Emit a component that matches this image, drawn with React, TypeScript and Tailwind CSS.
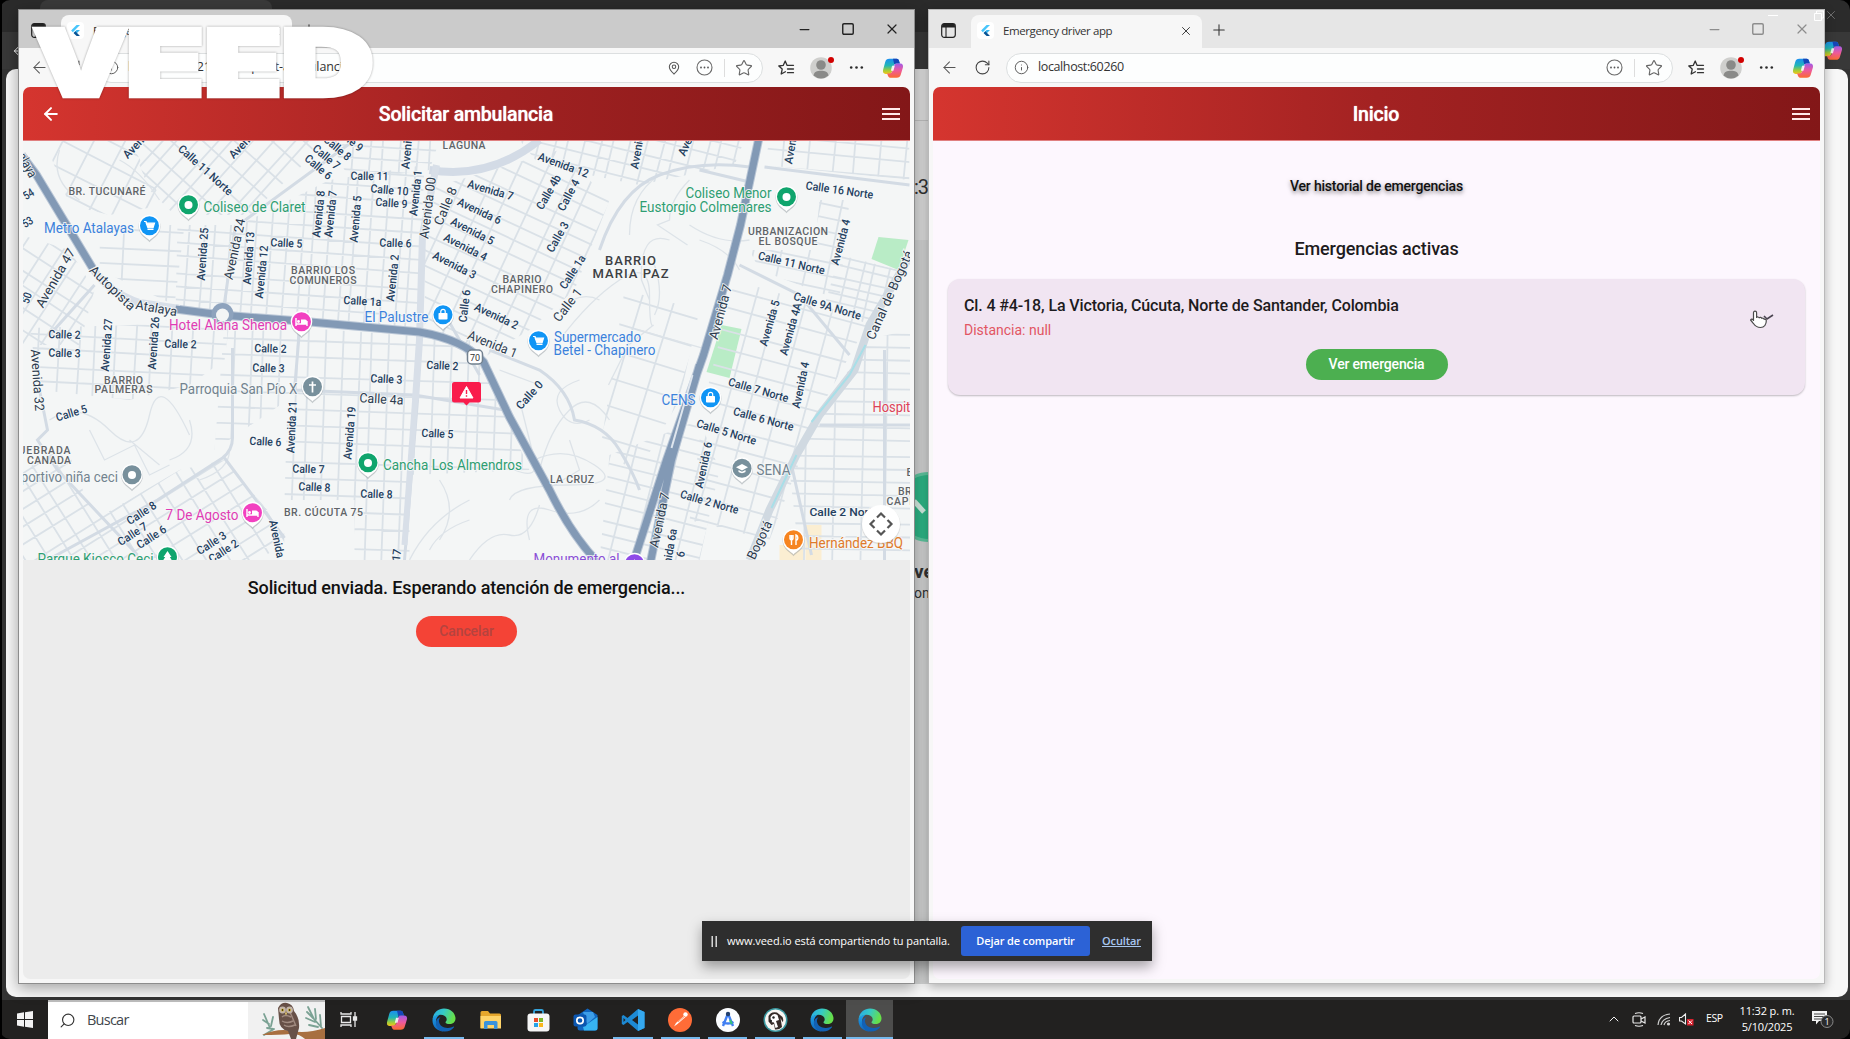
import React from "react";
import {
  ArrowLeft, RotateCw, Info, MapPin, Star, X, Plus, Minus, Square, Search, ChevronUp,
} from "lucide-react";

/* ---------- shared icons ---------- */

function Flutter({ size = 14 }: { size?: number }) {
  return (
    <svg width={size} height={size} viewBox="0 0 16 16" className="shrink-0">
      <path d="M9.3 1.2 2.6 7.9l2.1 2.1L13.5 1.2z" fill="#47c5fb" />
      <path d="M9.3 7.4 5.7 11l2.1 2.1 5.7-5.7z" fill="#35b3ee" />
      <path d="m5.7 11 2.1-2.1 5.7 5.9H9.3z" fill="#0b5394" />
    </svg>
  );
}

function Copilot({ size = 22 }: { size?: number }) {
  return (
    <svg width={size} height={size} viewBox="0 0 24 24" className="shrink-0">
      <defs>
        <linearGradient id="cpA" x1="0" y1="0" x2="0" y2="1">
          <stop offset="0" stopColor="#1b8ff0" />
          <stop offset=".45" stopColor="#22b7b5" />
          <stop offset=".75" stopColor="#9ccc3c" />
          <stop offset="1" stopColor="#f5c518" />
        </linearGradient>
        <linearGradient id="cpB" x1="0" y1="0" x2="0" y2="1">
          <stop offset="0" stopColor="#a05be8" />
          <stop offset=".5" stopColor="#ee5a9b" />
          <stop offset="1" stopColor="#fb6a32" />
        </linearGradient>
      </defs>
      <path d="M8 2h8c1.800 0 2.300 1.200 2.800 2.800L19.500 7H16c-2 0-2.800 1-3.400 3l-1.800 6c-.5 1.600-1.300 2.500-3 2.500H4C1.500 18.500.6 16.500 1.200 14l2.300-8.500C4.200 3 5.500 2 8 2z" fill="url(#cpA)" />
      <path d="M12 2h4c1.800 0 2.300 1.200 2.800 2.800L19.500 7H16c-1.300 0-2 .4-2.600 1.200z" fill="#1546b8" />
      <path d="M16 22.500H9c-1.800 0-2.300-1.200-2.800-2.800L5.500 18H8c2 0 2.800-1 3.400-3l1.800-5.500C13.700 8 14.500 7 16.200 7H20c2.500 0 3.400 2 2.800 4.500l-2.300 7.500c-.7 2.500-2 3.500-4.500 3.500z" fill="url(#cpB)" />
      <path d="M11 9.500h3L12.500 15H9.600z" fill="#fff" opacity=".85" />
    </svg>
  );
}

function Edge() {
  return (
    <svg width="24" height="24" viewBox="0 0 24 24">
      <defs>
        <linearGradient id="eg1" x1="0" y1="0" x2="1" y2=".3">
          <stop offset="0" stopColor="#27a7e8" />
          <stop offset=".5" stopColor="#35c9c6" />
          <stop offset="1" stopColor="#66df4a" />
        </linearGradient>
        <linearGradient id="eg2" x1="0" y1="0" x2="0" y2="1">
          <stop offset="0" stopColor="#1fa3ec" />
          <stop offset="1" stopColor="#0f62b8" />
        </linearGradient>
      </defs>
      <path d="M.6 11.500C1 5 6 .5 12 .5c7 0 11.500 5 11.500 10 0 3.600-2.800 5.600-6 5.600-2.600 0-4-.8-4-1.800 0-.6 1.200-1 1.200-3 0-2.400-2.500-4.600-6-4.600-4 0-7 2.200-8.100 4.800z" fill="url(#eg1)" />
      <path d="M.5 12C.9 8.700 4 6.500 8 6.700c-2.600 1.200-4.300 4-4 7.600.4 4.200 3.400 7.700 7.600 9.200C5 23.500.2 18.500.5 12z" fill="url(#eg2)" />
      <path d="M8.700 9.200c-1.400 1-2 2.600-1.700 4.600.6 4 4.600 6.400 9 6.200 2.400-.1 4.200-.8 5.600-1.400.5-.2.700.3.400.7-2 2.800-5.600 4.500-9.600 4.300C7 23.200 3.400 18.500 3.900 14c.3-2.700 2.400-4.500 4.800-4.800z" fill="#1261b4" />
    </svg>
  );
}

function Avatar() {
  return (
    <div className="relative h-[22px] w-[22px]">
      <svg width="22" height="22" viewBox="0 0 22 22">
        <circle cx="11" cy="11" r="10.800" fill="#cfcfcd" />
        <circle cx="11" cy="8" r="4.800" fill="#8a8a88" />
        <path d="M3.500 18.500C4 14.800 7 13.800 11 13.800s7 1 7.500 4.700A11 11 0 0 1 3.500 18.500z" fill="#8a8a88" />
      </svg>
      <span className="absolute -right-[2px] top-0 h-[6px] w-[6px] rounded-full bg-[#d10000]" />
    </div>
  );
}

function Dots({ circled = false }: { circled?: boolean }) {
  return (
    <svg width="17" height="17" viewBox="0 0 17 17">
      {circled && <circle cx="8.500" cy="8.500" r="7.500" fill="none" stroke="#6a6a6a" strokeWidth="1.100" />}
      {[circled ? 5 : 3.2, 8.5, circled ? 12 : 13.8].map((x) => (
        <circle key={x} cx={x} cy="8.500" r={circled ? 0.9 : 1.3} fill={circled ? "#555" : "#2b2b2b"} />
      ))}
    </svg>
  );
}

function Favorites() {
  return (
    <svg width="17" height="16" viewBox="0 0 17 16" fill="none" stroke="#333" strokeWidth="1.300" strokeLinejoin="round" strokeLinecap="round">
      <path d="M9 5.300 7.200 1 5.200 5.400.8 6l3.400 3.100-1 4.900L7.400 11.700M9 5.300h6.500M9.500 9h6M9.500 12.700h6" />
    </svg>
  );
}

/* ---------- browser frame ---------- */

type FrameProps = {
  active?: boolean;
  title: string;
  url: string;
  showPin?: boolean;
  tabIndent: string;
  tabWidth: string;
  heading: string;
  back?: boolean;
  children: React.ReactNode;
};

function BrowserWindow({ active, title, url, showPin, tabIndent, tabWidth, heading, back, children }: FrameProps) {
  const strip = active ? "bg-[#cbcbcb]" : "bg-[#e6e6e6]";
  const ctl = active ? "text-[#222]" : "text-[#8d8d8d]";
  const urlTracking = active ? "tracking-[-0.1px]" : "tracking-[-0.38px]";
  return (
    <div className="flex h-full flex-col bg-[#f7f7f7]">
      <div className={`flex h-[38px] shrink-0 items-end ${strip}`}>
        <div className={`${tabIndent} flex h-[34px] shrink-0 items-center pb-[2px] pl-[12px]`}>
          <svg width="15" height="15" viewBox="0 0 15 15">
            <rect x=".7" y=".7" width="13.600" height="13.600" rx="2.500" fill="none" stroke="#222" strokeWidth="1.200" />
            <path d="M1 3.500C1 1.500 1.800 1 3.200 1h8.600C13.200 1 14 1.500 14 3.500V4.500H1z" fill="#222" />
            <path d="M5 4v10" stroke="#222" strokeWidth="1.100" />
          </svg>
        </div>
        <div className={`${tabWidth} flex h-[33px] shrink-0 items-center rounded-t-lg bg-[#f7f7f7] pl-[6px] pr-[9px] pb-[2px]`}>
          <span className="flex h-[17px] w-[17px] items-center justify-center rounded-sm bg-white"><Flutter size={13} /></span>
          <span className="ml-[9px] flex-1 whitespace-nowrap font-['Open_Sans',sans-serif] text-[11.5px] tracking-[-0.4px] text-[#333]">{title}</span>
          <X size={14} strokeWidth={1.6} className="text-[#333]" />
        </div>
        <Plus size={18} strokeWidth={1.4} className="mb-[9px] ml-[8px] text-[#333]" />
        <div className={`mb-[11px] ml-auto flex items-center gap-[29px] pr-[14px] ${ctl}`}>
          <Minus size={15} strokeWidth={2} />
          <Square size={14} strokeWidth={2.4} />
          <X size={16} strokeWidth={1.8} />
        </div>
      </div>
      <div className="flex h-[39px] shrink-0 items-center pl-[11px] pr-[10px]">
        <ArrowLeft size={19} strokeWidth={1.3} className="text-[#555]" />
        <RotateCw size={17} strokeWidth={1.5} className="ml-[15px] text-[#444]" />
        <div className="ml-[15px] flex h-[30px] flex-1 items-center rounded-full border border-[#dcdfe0] bg-[#fdfefe] pl-[7px] pr-[9px]">
          <Info size={15} strokeWidth={1.5} className="text-[#555]" />
          <span className={`ml-[9px] flex-1 whitespace-nowrap font-['Open_Sans',sans-serif] text-[12.5px] text-[#333] ${urlTracking}`}>{url}</span>
          {showPin && <MapPin size={14} strokeWidth={1.8} className="mr-[15px] text-[#555]" />}
          <Dots circled />
          <span className="ml-[11px] h-[18px] w-px bg-[#ddd]" />
          <Star size={18} strokeWidth={1.5} className="ml-[10px] text-[#666]" />
        </div>
        <div className="ml-[15px]"><Favorites /></div>
        <div className="ml-[15px]"><Avatar /></div>
        <div className="ml-[16px]"><Dots /></div>
        <div className="ml-[17px]"><Copilot /></div>
      </div>
      <div className="mx-[4px] mb-[4px] flex flex-1 flex-col overflow-hidden rounded-[7px]">
        <header className="flex h-[54px] shrink-0 items-center border-b border-[#e08080] bg-gradient-to-r from-[#d5352f] via-[#a32222] to-[#831718] pl-[18px] pr-[10px] text-white">
          <div className="w-[20px]">{back && <ArrowLeft size={20} strokeWidth={2.4} />}</div>
          <h1 className="flex-1 pr-[11px] pt-[3px] text-center font-['Roboto',sans-serif] text-[19.5px] font-medium tracking-[-0.18px] [text-shadow:0_0_1px_#fff]">{heading}</h1>
          <div className="flex w-[18px] flex-col gap-[3px]">
            <span className="h-[2px] bg-[#ffeaea]" />
            <span className="h-[2px] bg-[#ffeaea]" />
            <span className="h-[2px] bg-[#ffeaea]" />
          </div>
        </header>
        {children}
      </div>
    </div>
  );
}

/* ---------- map ---------- */

type District = { pts: string; cx: number; cy: number; w: number; h: number; a: number; dx: number; dy: number };

const districts: District[] = [
  { pts: "22,235 70,250 95,290 80,345 22,345", cx: 60, cy: 290, w: 140, h: 140, a: -57, dx: 17, dy: 17 },
  { pts: "45,140 130,140 165,205 110,215 70,205", cx: 105, cy: 180, w: 160, h: 160, a: 27, dx: 26, dy: 22 },
  { pts: "130,140 330,140 250,215 175,215 150,190", cx: 230, cy: 180, w: 240, h: 200, a: 42, dx: 14, dy: 22 },
  { pts: "100,225 185,225 175,305 100,270", cx: 140, cy: 260, w: 120, h: 120, a: 3, dx: 44, dy: 16 },
  { pts: "178,225 240,225 330,180 425,165 418,330 176,308", cx: 300, cy: 250, w: 280, h: 220, a: 4, dx: 14, dy: 14 },
  { pts: "330,140 440,140 430,170 350,180", cx: 385, cy: 160, w: 130, h: 80, a: 4, dx: 16, dy: 13 },
  { pts: "425,190 560,150 610,200 575,290 530,330 480,360 425,330", cx: 510, cy: 250, w: 240, h: 260, a: 25, dx: 24, dy: 15 },
  { pts: "520,140 745,140 735,165 640,185 540,165", cx: 640, cy: 150, w: 260, h: 80, a: 14, dx: 15, dy: 14 },
  { pts: "770,140 910,140 910,180 765,165", cx: 840, cy: 160, w: 160, h: 90, a: 5, dx: 24, dy: 14 },
  { pts: "820,200 850,200 840,300 760,270 750,250 815,250", cx: 800, cy: 250, w: 140, h: 130, a: 12, dx: 26, dy: 14 },
  { pts: "840,255 900,270 870,325 825,305", cx: 860, cy: 290, w: 90, h: 90, a: 13, dx: 14, dy: 9 },
  { pts: "735,280 870,320 820,410 770,540 690,520 705,400", cx: 780, cy: 400, w: 260, h: 300, a: 15, dx: 26, dy: 19 },
  { pts: "865,340 911,330 911,560 800,560 790,470 830,405", cx: 860, cy: 450, w: 160, h: 260, a: 1, dx: 27, dy: 13.5 },
  { pts: "30,328 230,322 225,360 190,385 130,400 40,390", cx: 130, cy: 360, w: 220, h: 100, a: 3, dx: 19, dy: 15 },
  { pts: "225,322 470,340 500,400 530,470 410,475 410,560 355,560 355,500 285,500 288,400 215,450", cx: 370, cy: 440, w: 340, h: 260, a: 2, dx: 15.500, dy: 17 },
  { pts: "22,450 70,455 95,520 180,470 225,460 285,530 285,560 22,560", cx: 150, cy: 510, w: 300, h: 200, a: -32, dx: 19, dy: 16 },
  { pts: "610,455 700,420 720,470 700,560 600,560", cx: 660, cy: 500, w: 160, h: 160, a: 14, dx: 22, dy: 14 },
  { pts: "625,290 700,310 680,400 640,470 600,455", cx: 655, cy: 380, w: 130, h: 200, a: 17, dx: 30, dy: 28 },
];

function gridPath(d: District) {
  let s = "";
  let i = 0;
  for (let x = -d.w / 2; x <= d.w / 2; x += d.dx) {
    const j = ((i++ * 37) % 7) - 3;
    s += `M${x + j} ${-d.h / 2}L${x + j * 0.6} ${d.h / 2}`;
  }
  for (let y = -d.h / 2; y <= d.h / 2; y += d.dy) {
    const j = ((i++ * 29) % 5) - 2;
    s += `M${-d.w / 2} ${y + j}L${d.w / 2} ${y + j * 0.5}`;
  }
  return s;
}

type Kind = "st" | "av" | "area" | "big" | "green" | "blue" | "pink" | "gray" | "orange" | "red" | "purple";
const kinds: Record<Kind, { fill: string; size: number; weight: number }> = {
  st: { fill: "#24405f", size: 11.5, weight: 500 },
  av: { fill: "#2c3b4e", size: 13, weight: 400 },
  area: { fill: "#606468", size: 10.5, weight: 500 },
  big: { fill: "#3c4043", size: 13, weight: 500 },
  green: { fill: "#2e9e72", size: 14, weight: 400 },
  blue: { fill: "#3b82dc", size: 14, weight: 400 },
  pink: { fill: "#e03cb4", size: 14, weight: 400 },
  gray: { fill: "#72838f", size: 14, weight: 400 },
  orange: { fill: "#e07a2a", size: 14, weight: 400 },
  red: { fill: "#dd4258", size: 14, weight: 400 },
  purple: { fill: "#8a4fd6", size: 14, weight: 400 },
};

/* text, centre x, centre y, rotation, length, kind */
const labels: [string, number, number, number, number, Kind][] = [
  ["Avenida", 139, 142, -47, 40, "st"],
  ["Avenida", 245, 142, -47, 40, "st"],
  ["Calle 11 Norte", 206, 170, 42, 69, "st"],
  ["alaya", 28, 165, 62, 26, "av"],
  ["54", 29, 194, -32, 11, "st"],
  ["53", 28, 222, -32, 11, "st"],
  ["50", 27, 298, -70, 11, "st"],
  ["BR. TUCUNARÉ", 107.5, 191, 0, 77, "area"],
  ["Coliseo de Claret", 255, 207, 0, 102, "green"],
  ["Metro Atalayas", 89.5, 228, 0, 90, "blue"],
  ["Avenida 47", 56, 278, -60, 66, "av"],
  ["Avenida 25", 203, 254, -86, 53, "st"],
  ["Avenida 24", 235, 249, -78, 62, "av"],
  ["Avenida 13", 249, 258, -86, 53, "st"],
  ["Avenida 12", 262, 272, -84, 53, "st"],
  ["Calle 5", 287, 243, 3, 32, "st"],
  ["Avenida 8", 319, 214, -84, 47, "st"],
  ["Avenida 7", 331, 214, -84, 47, "st"],
  ["Avenida 5", 356, 219, -85, 47, "st"],
  ["Calle 8", 338, 148, 40, 32, "st"],
  ["Calle 9", 350, 139, 40, 32, "st"],
  ["Calle 7", 327, 157, 40, 32, "st"],
  ["Calle 6", 319, 167, 40, 32, "st"],
  ["Calle 11", 370, 176, 1, 38, "st"],
  ["Calle 10", 390, 190, 5, 38, "st"],
  ["Calle 9", 392, 203, 4, 32, "st"],
  ["Calle 6", 396, 243, 2, 32, "st"],
  ["Avenida 3", 408, 144, -85, 50, "st"],
  ["Avenida 1", 416, 193, -84, 46, "st"],
  ["Avenida 00", 428, 208, -83, 62, "av"],
  ["Calle 8", 446, 206, -67, 40, "av"],
  ["Avenida 2", 393, 278, -84, 47, "st"],
  ["Calle 1a", 363, 301, 3, 38, "st"],
  ["Calle 6", 465, 306, -83, 33, "st"],
  ["BARRIO LOS", 323.5, 270, 0, 64, "area"],
  ["COMUNEROS", 323.5, 280, 0, 67, "area"],
  ["LAGUNA", 464.5, 145.500, 0, 43, "area"],
  ["Avenida 12", 564, 165, 20, 53, "st"],
  ["Avenida 7", 491, 190, 16, 47, "st"],
  ["Avenida 6", 480, 211, 25, 47, "st"],
  ["Avenida 5", 473, 231, 27, 47, "st"],
  ["Avenida 4", 466, 247, 27, 47, "st"],
  ["Avenida 3", 455, 265, 27, 47, "st"],
  ["Calle 4b", 549, 192, -60, 38, "st"],
  ["Calle 4", 569, 195, -62, 34, "st"],
  ["Calle 3", 558, 237, -60, 33, "st"],
  ["Calle 1a", 573, 272, -57, 38, "st"],
  ["Calle 1", 568, 305, -52, 38, "av"],
  ["Avenida", 638, 149, -80, 40, "st"],
  ["Avenida", 690, 137, -65, 40, "st"],
  ["Avenida", 792, 144, -80, 40, "st"],
  ["Calle 16 Norte", 840, 190, 8, 68, "st"],
  ["Coliseo Menor", 729, 192.500, 0, 86, "green"],
  ["Eustorgio Colmenares", 706, 206.500, 0, 132, "green"],
  ["URBANIZACION", 788.5, 231, 0, 80, "area"],
  ["EL BOSQUE", 788.5, 241, 0, 59, "area"],
  ["BARRIO", 631, 260, 0, 51, "big"],
  ["MARIA PAZ", 631, 273, 0, 76, "big"],
  ["BARRIO", 522.5, 279, 0, 39, "area"],
  ["CHAPINERO", 522.5, 289, 0, 62, "area"],
  ["Calle 11 Norte", 792, 263, 13, 68, "st"],
  ["Avenida 4", 841, 242, -75, 47, "st"],
  ["Calle 9A Norte", 828, 306, 17, 70, "st"],
  ["Avenida 5", 770, 323, -74, 47, "st"],
  ["Avenida 4A", 791, 329, -74, 54, "st"],
  ["Avenida 7", 721, 312, -75, 56, "av"],
  ["Canal de Bogotá", 890, 295, -66, 96, "av"],
  ["Avenida 2", 497, 316, 25, 47, "st"],
  ["Avenida 1", 493, 344, 22, 52, "av"],
  ["Supermercado", 598, 336.500, 0, 87, "blue"],
  ["Betel - Chapinero", 605, 350, 0, 102, "blue"],
  ["El Palustre", 397, 317, 0, 64, "blue"],
  ["Autopista", 113, 288, 44, 58, "av"],
  ["Atalaya", 157, 308, 10, 42, "av"],
  ["Hotel Alana Shenoa", 228.5, 325, 0, 118, "pink"],
  ["Calle 2", 65, 334.500, 2, 32, "st"],
  ["Calle 3", 65, 353, 2, 32, "st"],
  ["Avenida 27", 107, 345, -86, 53, "st"],
  ["Avenida 26", 154, 343, -86, 53, "st"],
  ["Avenida 32", 38, 380, 86, 62, "av"],
  ["Calle 2", 181, 344, 2, 32, "st"],
  ["Calle 2", 271, 348.500, 2, 32, "st"],
  ["Calle 3", 269, 368, 2, 32, "st"],
  ["Calle 2", 443, 365.500, 3, 32, "st"],
  ["Calle 3", 387, 379, 3, 32, "st"],
  ["Calle 4a", 382, 399, 3, 44, "av"],
  ["Calle 5", 72, 413, -17, 32, "st"],
  ["BARRIO", 124, 380, 0, 39, "area"],
  ["PALMERAS", 124, 389.500, 0, 58, "area"],
  ["Parroquia San Pío X", 239, 389, 0, 118, "gray"],
  ["Calle 6", 266, 441.500, 3, 32, "st"],
  ["Avenida 21", 292, 427, -87, 52, "st"],
  ["Avenida 19", 350, 433, -85, 53, "st"],
  ["Calle 5", 438, 433.500, 3, 32, "st"],
  ["Calle 7", 309, 469, 2, 32, "st"],
  ["Calle 8", 315, 487, 3, 32, "st"],
  ["Calle 8", 377, 494, 2, 32, "st"],
  ["Cancha Los Almendros", 453, 465, 0, 139, "green"],
  ["QUEBRADA", 41, 450.500, 0, 60, "area"],
  ["CANADA", 49.5, 460, 0, 44, "area"],
  ["Deportivo niña ceci", 62, 477, 0, 113, "gray"],
  ["Calle 8", 142, 513, -33, 33, "st"],
  ["Calle 7", 133, 534, -33, 33, "st"],
  ["Calle 6", 152, 537, -33, 33, "st"],
  ["Calle 3", 212, 543, -33, 33, "st"],
  ["Calle 2", 224, 551, -33, 33, "st"],
  ["7 De Agosto", 202.5, 515, 0, 73, "pink"],
  ["Avenida 21", 279, 546, 78, 53, "st"],
  ["BR. CÚCUTA 75", 324, 512.500, 0, 79, "area"],
  ["Parque Kiosco Ceci", 96, 558.500, 0, 116, "green"],
  ["17", 397, 555, -83, 12, "st"],
  ["LA CRUZ", 572.5, 479, 0, 44, "area"],
  ["Calle 0", 530, 395, -48, 34, "st"],
  ["CENS", 679, 400, 0, 34, "blue"],
  ["Calle 7 Norte", 759, 390, 16, 62, "st"],
  ["Calle 6 Norte", 764, 419, 15, 62, "st"],
  ["Calle 5 Norte", 727, 432, 17, 62, "st"],
  ["Avenida 4", 801, 385, -78, 47, "st"],
  ["Avenida 6", 704, 465, -78, 47, "st"],
  ["Calle 2 Norte", 710, 502, 16, 60, "st"],
  ["SENA", 774, 469.500, 0, 34, "gray"],
  ["Avenida 7", 660, 520, -78, 56, "av"],
  ["Avenida 6a", 669, 555, -80, 53, "st"],
  ["6", 681, 554, -80, 6, "st"],
  ["Bogotá", 760, 540, -64, 41, "av"],
  ["Calle 2 Norte", 845, 512, 0, 70, "st"],
  ["Hospital", 897, 406.500, 0, 48, "red"],
  ["BR.", 907, 491.500, 0, 17, "area"],
  ["CAPILLANA", 918, 501.500, 0, 62, "area"],
  ["E", 910, 472, 0, 6, "area"],
  ["Hernández BBQ", 856.5, 542.500, 0, 94, "orange"],
  ["Monumento al", 577, 558.500, 0, 86, "purple"],
];

type Glyph = "dot" | "cart" | "bag" | "bed" | "cross" | "cap" | "fork" | "tree" | "star";
const pins: [number, number, string, Glyph][] = [
  [189, 205, "#10a56d", "dot"], [150, 226, "#1095f5", "cart"], [302, 322, "#f240c0", "bed"],
  [443.5, 315, "#1095f5", "bag"], [539, 341, "#1095f5", "cart"], [787, 197, "#10a56d", "dot"],
  [711, 398, "#1095f5", "bag"], [742.5, 468.5, "#78909c", "cap"], [368.5, 463, "#10a56d", "dot"],
  [313, 387, "#78909c", "cross"], [132.5, 475, "#78909c", "dot"], [253, 513, "#f240c0", "bed"],
  [168, 557, "#10a56d", "tree"], [635, 564, "#8f4be8", "star"], [794, 540, "#f68420", "fork"],
];

function PinGlyph({ g }: { g: Glyph }) {
  switch (g) {
    case "dot": return <circle r="4" fill="#fff" />;
    case "cart": return <path d="M-5.500-4.500h2l.8 1.700H5L3.500 1.800h-5L-3.500-3.500M-2 3.500h6" fill="#fff" stroke="#fff" strokeWidth="1.200" />;
    case "bag": return <><rect x="-4.500" y="-2" width="9" height="6.500" rx=".8" fill="#fff" /><path d="M-2.200-2V-3.500a2.200 2.200 0 0 1 4.400 0V-2" fill="none" stroke="#fff" strokeWidth="1.200" /></>;
    case "bed": return <><path d="M-5.500-4V4M5.500 4V-1M-5.500 2H5.500" stroke="#fff" strokeWidth="1.400" /><path d="M-.5-2.500h4a2 2 0 0 1 2 2V2h-6z" fill="#fff" /><circle cx="-3" cy="-.5" r="1.400" fill="#fff" /></>;
    case "cross": return <path d="M0-5.500V5.500M-3.500-2H3.500" stroke="#fff" strokeWidth="1.700" />;
    case "cap": return <><path d="M0-4.500 6-1.300 0 2-6-1.300z" fill="#fff" /><path d="M-3.500 1.500V3.500C-1.500 5 1.500 5 3.500 3.500V1.500L0 3.300z" fill="#fff" /></>;
    case "fork": return <path d="M-3.500-5V-1.500A1.500 1.500 0 0 0-.5-1.500V-5M-2-5V5M2.500 5V-5C5-4 5 0 2.500 .5" fill="none" stroke="#fff" strokeWidth="1.400" />;
    case "tree": return <path d="M0-6 4 0H2.300L4.500 3.500H-4.500L-2.300 0H-4z" fill="#fff" />;
    default: return <path d="M0-5 1.500-1.500 5 0 0 5-5 0-1.500-1.500z" fill="#fff" />;
  }
}

function CityMap() {
  return (
    <svg className="block h-full w-full" viewBox="23 141 888 419" preserveAspectRatio="xMidYMin slice">
      <rect x="20" y="138" width="895" height="430" fill="#f4f6f6" />
      <g fill="#b9ecc6">
        <path d="M879 237 909 240 899 270 872 259z" />
        <path d="M722 325 742 329 730 378 707 372z" />
      </g>
      <path d="M780 545h24v15h-24zM806 525h16v35h-16z" fill="#fbeed2" />
      <defs>
        {districts.map((d, i) => (
          <clipPath key={i} id={`dist${i}`}><polygon points={d.pts} /></clipPath>
        ))}
      </defs>
      {districts.map((d, i) => (
        <g key={i} clipPath={`url(#dist${i})`}>
          <path d={gridPath(d)} transform={`translate(${d.cx} ${d.cy}) rotate(${d.a})`} stroke="#dae1e7" strokeWidth="1.800" fill="none" />
        </g>
      ))}
      {/* winding lanes */}
      <g fill="none" stroke="#dde3e8" strokeWidth="1.300">
        <path d="M560 340q30-40 60-60t30 15 4 30l-25 20-20 40M655 265q10 30 0 50M670 240q-30-10-28 40l8 20M560 310q20-20 40-10" />
        <path d="M520 400q10 40 15 60t-20 10M535 460q30-15 60 5t-25 20-60 15M540 470q10-40 30-60t40 10M570 440l10 30-25 15M600 500q-20 20-50 10t-20 30M470 560q20-30 40-25t30-30M590 420q-20 10-30-10t20-30" />
        <path d="M50 420q30-20 60 10t40-15 40 20M90 430l15 30 30-15 15 30 20-10M190 420q10 30-20 40M130 440l30 25M410 560q20-40 60-60M430 550q10-20 40-30M440 480q20 30 0 60M200 480q30-10 30-30" />
        <path d="M660 175q-30 20-30 60M690 180q-20 20-20 40l-12 5 30 20M700 240q30 10 40 30M640 330l70 20M500 370l40 15M690 225q30 20 60 15M120 160q20 10 40 40M60 150q-10 30 20 50" />
      </g>
      {/* secondary streets */}
      <g fill="none" stroke="#d3dbe4" strokeWidth="3">
        <path d="M243 222 355 140M236 225 224 310M50 335l45-50M40 390l8 40-10 10 20 30 80 85M48 560l110-60 65-42q10-8 10-20v-90M225 458l60 80M405 560l13-160M440 305l40 70M300 330l-5 60 120 5 90 15" />
        <path d="M600 250q20-60 60-75t90-8M740 265l60 30 50 60M490 350l50 20q30 20 35 50 30 5 45 30t20 40M700 170l50 12M910 185l-145-18" />
        <path d="M792 465l20 90M820 425h91M885 350v210" />
      </g>
      <path d="M430 170q60 10 110-30" fill="none" stroke="#d3dbe6" strokeWidth="8" />
      <path d="M437 165 423 235 420 340 416 400" fill="none" stroke="#d8dfe8" strokeWidth="7" />
      <path d="M416 395 405 545" fill="none" stroke="#d8dfe8" strokeWidth="6" />
      <path d="M911 255 870 325 855 370 820 415 797 455 770 510 750 560" fill="none" stroke="#d0d9e1" strokeWidth="8" />
      <path d="M866 345 850 375 812 422M797 455 772 508" fill="none" stroke="#a8dfe8" strokeWidth="2" />
      {/* highways */}
      <g fill="none" strokeLinecap="butt" strokeLinejoin="round">
        <path d="M22 155 37 175 93 268M176 309 222 315 300 321 420 332Q465 340 484 362L510 417 550 490Q572 535 598 562" stroke="#b9c6d6" strokeWidth="9" />
        <path d="M93 268Q108 292 140 303L180 309" stroke="#d8dfe8" strokeWidth="8" />
        <path d="M759 140 741 225 728 275 704 355 667 460 634 562M700 365 672 460 651 562" stroke="#b9c6d6" strokeWidth="9" />
        <path d="M22 155 37 175 93 268M176 309 222 315 300 321 420 332Q465 340 484 362L510 417 550 490Q572 535 598 562" stroke="#8299b5" strokeWidth="7" />
        <path d="M759 140 741 225 728 275 704 355 667 460 634 562M700 365 672 460 651 562" stroke="#8299b5" strokeWidth="7" />
        <path d="M693 375 672 448" stroke="#dfe6ee" strokeWidth="2" />
      </g>
      <circle cx="223" cy="314" r="11" fill="#8ea3bd" />
      <circle cx="223" cy="315" r="6.500" fill="#f3f5f5" />
      <g fontFamily="Roboto, sans-serif" textAnchor="middle" dominantBaseline="central">
        {labels.map(([t, x, y, a, w, k], i) => {
          const s = kinds[k];
          return (
            <text
              key={i}
              transform={`translate(${x} ${y}) rotate(${a})`}
              textLength={w}
              lengthAdjust={k === "area" || k === "big" ? "spacing" : "spacingAndGlyphs"}
              fontSize={s.size}
              fontWeight={s.weight}
              fill={s.fill}
              stroke="#f6f8f8"
              strokeWidth="2"
              strokeOpacity=".85"
              paintOrder="stroke"
            >
              {t}
            </text>
          );
        })}
      </g>
      {pins.map(([x, y, c, g], i) => (
        <g key={i} transform={`translate(${x} ${y})`}>
          <path d="M0 15.500C-2 12.500-11 9-11-.5a11 11 0 0 1 22 0C11 9 2 12.500 0 15.500z" fill="#8a929a" opacity=".45" transform="translate(0 .8)" />
          <path d="M0 14.500C-2 11.500-10.800 8.500-10.800-.5a10.800 10.800 0 0 1 21.600 0C10.800 8.500 2 11.500 0 14.500z" fill="#fff" />
          <circle r="9.500" cy="-.3" fill={c} />
          <PinGlyph g={g} />
        </g>
      ))}
      <rect x="468" y="350" width="15" height="14" rx="4" fill="#fff" stroke="#72818f" strokeWidth="1.500" />
      <text x="475.500" y="361" textAnchor="middle" fontFamily="Roboto, sans-serif" fontSize="9" fill="#333">70</text>
      <path d="M455 382h24a2.500 2.500 0 0 1 2.500 2.500v15.500a2.500 2.500 0 0 1-2.500 2.500h-9l-3 3-3-3h-9a2.500 2.500 0 0 1-2.500-2.500V384.500a2.500 2.500 0 0 1 2.500-2.500z" fill="#f91c4c" />
      <path d="M467 386.500 473.500 398h-13z" fill="#fff" stroke="#fff" strokeLinejoin="round" />
      <path d="M467 390v4M467 395.300v1.500" stroke="#f91c4c" strokeWidth="1.400" />
      <circle cx="881.500" cy="525" r="19.500" fill="#999" opacity=".25" />
      <circle cx="881.500" cy="524" r="19" fill="#fff" />
      <path d="M877.500 517.500l4-4 4 4M877.500 530.500l4 4 4-4M875 520l-4 4 4 4M888 520l4 4-4 4" fill="none" stroke="#555" strokeWidth="2.200" />
    </svg>
  );
}

/* ---------- taskbar ---------- */

function TaskView() {
  return (
    <svg width="18" height="17" viewBox="0 0 18 17" fill="none" stroke="#e8e8e8" strokeWidth="1.300">
      <path d="M1 1v2h10V1M1 16v-2h10v2M1.500 5.500h9v6h-9zM15 1v15" /><path d="M13.500 6h3v3h-3z" fill="#e8e8e8" />
    </svg>
  );
}
function Folder() {
  return (
    <svg width="22" height="20" viewBox="0 0 22 20">
      <path d="M.5 2.500A1.500 1.500 0 0 1 2 1h6l2 2.500h9.500A1.500 1.500 0 0 1 21 5v13H.5z" fill="#e6a72d" />
      <path d="M.5 6H21v12.500H.5z" fill="#ffd46a" />
      <path d="M4 19v-6.500A1.500 1.500 0 0 1 5.500 11h10.500a1.500 1.500 0 0 1 1.500 1.500V19h-3.500v-4H7.500v4z" fill="#3a93dd" />
    </svg>
  );
}
function Store() {
  return (
    <svg width="23" height="24" viewBox="0 0 23 24">
      <path d="M7 6V3.500A1.500 1.500 0 0 1 8.500 2h6A1.500 1.500 0 0 1 16 3.500V6" fill="none" stroke="#35a4dc" strokeWidth="1.800" />
      <rect x=".5" y="5.500" width="22" height="18" rx="3" fill="#f6f6f6" />
      <path d="M7 10h4v4H7z" fill="#e84c2a" /><path d="M12 10h4v4h-4z" fill="#7db82a" />
      <path d="M7 15h4v4H7z" fill="#25a3e8" /><path d="M12 15h4v4h-4z" fill="#f8b61c" />
    </svg>
  );
}
function Outlook() {
  return (
    <svg width="25" height="23" viewBox="0 0 25 23">
      <path d="M5 7 14.500.5 24.500 7v13a2.500 2.500 0 0 1-2.500 2.500H7A2.500 2.500 0 0 1 4.500 20z" fill="#1066c0" />
      <path d="M10 4h10l2 5-8 7z" fill="#3d9ee8" /><path d="M24.500 9 10 19l1 3.500h11a2.500 2.500 0 0 0 2.500-2.500z" fill="#37b4f2" />
      <rect x=".5" y="6.500" width="13" height="12" rx="2" fill="#0b56b0" />
      <circle cx="7" cy="12.500" r="3.200" fill="none" stroke="#fff" strokeWidth="1.700" />
    </svg>
  );
}
function Code() {
  return (
    <svg width="24" height="24" viewBox="0 0 24 24">
      <path d="M17 1 23.500 4v16L17 23 6.500 14 2.500 17 .8 16V8l1.700-1 4 3z" fill="#1d8ad4" />
      <path d="M17 1 23.500 4v16L17 23z" fill="#35a8ee" />
      <path d="M17 7.500v9L11 12zM2.500 10v4l2-2z" fill="#222120" />
    </svg>
  );
}
function Postman() {
  return (
    <svg width="24" height="24" viewBox="0 0 24 24">
      <circle cx="12" cy="12" r="12" fill="#ff6c37" />
      <path d="M6 18.500 8 15l8.500-7.500L17.500 9 9.500 16z" fill="#fff" /><circle cx="17.500" cy="6.500" r="2.200" fill="#fff" />
      <path d="m10 14 7-6" stroke="#ff6c37" strokeWidth=".7" />
    </svg>
  );
}
function Studio() {
  return (
    <svg width="24" height="24" viewBox="0 0 24 24">
      <circle cx="12" cy="12" r="12" fill="#fbfdff" />
      <path d="m12 5.500-5 12.500M12 5.500 17 18M6.500 14q5.500 3 11 0" fill="none" stroke="#3f7ef2" strokeWidth="2.400" />
      <circle cx="12" cy="6" r="2.200" fill="#22406e" /><path d="m14 12 1.800 4" stroke="#36c27a" strokeWidth="2.200" />
    </svg>
  );
}
function Beaver() {
  return (
    <svg width="25" height="24" viewBox="0 0 25 24">
      <circle cx="12.500" cy="12" r="12" fill="#3c9aa2" /><circle cx="12.500" cy="12" r="10.500" fill="#f8f6f3" />
      <path d="M5.500 8Q8 3 14 4.500L19.500 9Q21 13 19.500 14L17.500 10 19 19Q16 22 12 21.500L11 16 8.500 17 5.500 13.500z" fill="#352b28" />
      <path d="M7.500 9Q10 4.500 14.500 7L16 12 13 13 15 19 12.500 20 11 14.500 8 14z" fill="#fff" />
      <circle cx="10.500" cy="9.500" r="1.200" fill="#222" /><circle cx="7.800" cy="13" r="1.300" fill="#222" />
    </svg>
  );
}
function Owl() {
  return (
    <svg width="77" height="38" viewBox="0 0 77 38">
      <rect width="77" height="38" fill="#f1f1f1" />
      <g fill="none" stroke="#7ba294" strokeWidth="1.800" strokeLinecap="round">
        <path d="M16 12l6 14M15 18l6 4M25 15l-2 9M16 33l10-6M19 26l6 1M60 5l6 12 8 9M59 10l6 6M58 16l9 4M61 23l9 2M67 7l1 10M72 13l1 11" />
      </g>
      <path d="M14 33Q30 26 44 29T77 26V38H58Q52 31 42 32T14 33z" fill="#a86f40" />
      <path d="M30 6Q33 0 39 1T46 9Q52 16 51 26L48 37H43L40 29Q31 27 31 17z" fill="#685148" />
      <path d="M34 15q3-3 9 0M34 19q5 3 11 0M36 23q4 3 11 0M42 10l6 14" stroke="#a18b80" strokeWidth="1.400" fill="none" />
      <circle cx="34.500" cy="8" r="3.400" fill="#c3b5a9" /><circle cx="41.500" cy="8" r="3.400" fill="#c3b5a9" />
      <circle cx="34.500" cy="8" r="1.500" fill="#ddb93a" /><circle cx="41.500" cy="8" r="1.500" fill="#ddb93a" />
      <circle cx="34.500" cy="8" r=".8" /><circle cx="41.500" cy="8" r=".8" />
      <path d="M38 9l1.200 3.500-2.400 0z" fill="#e2c76a" />
    </svg>
  );
}

const apps: { icon: React.ReactNode; open?: boolean; active?: boolean }[] = [
  { icon: <Copilot size={22} /> },
  { icon: <Edge />, open: true },
  { icon: <Folder /> },
  { icon: <Store /> },
  { icon: <Outlook /> },
  { icon: <Code />, open: true },
  { icon: <Postman />, open: true },
  { icon: <Studio />, open: true },
  { icon: <Beaver />, open: true },
  { icon: <Edge />, open: true },
  { icon: <Edge />, open: true, active: true },
];

function Taskbar() {
  return (
    <div className="flex h-[39px] items-stretch bg-[#222120] text-white">
      <div className="flex w-[46px] items-center justify-center">
        <svg width="16" height="17" viewBox="0 0 16 17" fill="#f3f3f3">
          <path d="M0 2.400 7 1.300V8H0zM8 1.200 16 0v8H8zM0 9h7v6.700L0 14.600zM8 9h8v8L8 15.800z" />
        </svg>
      </div>
      <div className="flex w-[277px] items-center border-t-2 border-[#bcbcbc] bg-white pl-[11px]">
        <Search size={17} strokeWidth={1.6} className="-scale-x-100 text-[#333]" />
        <span className="ml-[11px] flex-1 pb-[2px] font-['Open_Sans',sans-serif] text-[14.5px] tracking-[-0.75px] text-[#41464c]">Buscar</span>
        <Owl />
      </div>
      <div className="flex w-[48px] items-center justify-center"><TaskView /></div>
      <div className="flex">
        {apps.map((a, i) => (
          <div key={i} className={`relative flex w-[47.300px] items-center justify-center ${a.active ? "bg-[#4d4d4c]" : ""}`}>
            {a.icon}
            {a.open && <span className={`absolute bottom-0 h-[2px] bg-[#76b9ed] ${a.active ? "inset-x-0" : "inset-x-[4px]"}`} />}
          </div>
        ))}
      </div>
      <div className="ml-auto flex items-center pb-[1px] pr-[15px] font-['Open_Sans',sans-serif]">
        <ChevronUp size={16} strokeWidth={1.4} />
        <svg className="ml-[10px]" width="14" height="15" viewBox="0 0 14 15" fill="none" stroke="#e8e8e8" strokeWidth="1.200">
          <rect x="1" y="4" width="8" height="7" rx="1" /><path d="M9 7l4-2v6l-4-2M3 1.500q4-1.500 8 0M3 13.500q4 1.500 8 0" />
        </svg>
        <svg className="ml-[11px]" width="14" height="13" viewBox="0 0 14 13" fill="none" stroke="#cfcfcf" strokeWidth="1.200">
          <path d="M1 12Q2 2 13 1M4 12Q5 6 13 4.500M7 12q1-4 6-4.500" /><circle cx="11.500" cy="11" r="1" fill="#fff" />
        </svg>
        <svg className="ml-[8px]" width="15" height="13" viewBox="0 0 15 13">
          <path d="M.5 4.500h2L6.500 1v10L2.500 8h-2z" fill="none" stroke="#eee" strokeWidth="1.100" />
          <rect x="8" y="6" width="6.500" height="6.500" fill="#d8222e" /><path d="m9.500 7.500 3.500 3.500m0-3.500-3.500 3.500" stroke="#fff" />
        </svg>
        <span className="ml-[12px] w-[19px] text-[10.500px] tracking-[-0.4px]">ESP</span>
        <div className="ml-[11px] flex w-[62px] flex-col items-center whitespace-nowrap text-[11px] leading-[16px] tracking-[-0.15px]">
          <span>11:32 p. m.</span>
          <span>5/10/2025</span>
        </div>
        <div className="relative ml-[13px] h-[18px] w-[24px]">
          <svg width="24" height="18" viewBox="0 0 24 18">
            <path d="M1 1h15v10H8l-3 3.500V11H1z" fill="#f4f4f4" />
            <path d="M3 4h11M3 6.500h11M3 9h8" stroke="#333" strokeWidth=".9" />
            <circle cx="16" cy="11.500" r="6" fill="#2b2b2b" stroke="#8a8a8a" />
            <text x="16" y="15" textAnchor="middle" fontFamily="Open Sans, sans-serif" fontSize="9" fill="#fff">1</text>
          </svg>
        </div>
      </div>
    </div>
  );
}

/* ---------- watermark ---------- */

const veed: [string, number, number][] = [["V", 33, 95], ["E", 126, 78], ["E", 204, 78], ["D", 281, 93]];

function Watermark() {
  return (
    <svg className="absolute left-0 top-0 drop-shadow-[0_0_1px_rgba(0,0,0,0.35)]" width="400" height="120" viewBox="0 0 400 120" fontFamily="Inter, sans-serif" fontWeight="900">
      <g fill="#fff" stroke="#fff" strokeWidth="4.500">
        {veed.map(([c, x, w], i) => (
          <text key={i} x={x} y="95.500" fontSize="92" textLength={w} lengthAdjust="spacingAndGlyphs">{c}</text>
        ))}
      </g>
    </svg>
  );
}

/* ---------- page ---------- */

export default function App() {
  return (
    <div className="relative h-[1039px] w-[1850px] overflow-hidden bg-black">
      {/* background browser and taskbar */}
      <div className="flex h-full flex-col overflow-hidden rounded-[10px] pl-[2px]">
        <div className="flex h-[32px] shrink-0 items-end justify-between bg-[#2b2b2b] pl-[38px] pr-[12px]">
          <div className="h-[32px] w-[232px] rounded-t-lg bg-[#3a3a3a]" />
          <X size={14} strokeWidth={1.200} className="mb-[10px] text-[#8b8b8b]" />
        </div>
        <div className="flex h-[37px] shrink-0 items-center justify-between bg-[#383838] pl-[9px] pr-[7px]">
          <ArrowLeft size={16} className="text-white" strokeWidth={1.4} />
          <Copilot size={21} />
        </div>
        <div className="flex min-h-0 flex-1 flex-col bg-[#333] pl-[4px] pr-[2px] pb-[3px]">
          <div className="flex-1 rounded-[10px] bg-[#f7f7f7]" />
        </div>
        <Taskbar />
      </div>

      {/* slice of the page between both windows */}
      <div className="absolute left-[914px] top-[69px] h-[915px] w-[16px] overflow-hidden bg-[#d2d3d3] font-['Roboto',sans-serif] text-[#333]">
        <div className="h-[51px] bg-[#dedede]" />
        <div className="h-[120px] border-t border-[#c0c0c0] bg-[#dcdcdc] pt-[51px] text-[20px] leading-[30px] tracking-[-1px]">:3</div>
        <div className="h-[160px]" />
        <div className="relative mt-[69px] h-[74px]">
          <span className="absolute -left-[20px] top-[3px] h-[70px] w-[70px] rounded-full border-[3px] border-[#5fc7a0] bg-[#2fb787]" />
          <svg className="absolute left-0 top-[30px]" width="16" height="20"><path d="M0 2 10 13" stroke="#d5efe4" strokeWidth="5" /></svg>
        </div>
        <div className="mt-[17px] text-[19px] font-bold leading-[24px]">ve</div>
        <div className="text-[14px] leading-[18px]">on</div>
      </div>

      {/* passenger app */}
      <div className="absolute left-[18px] top-[9px] h-[975px] w-[897px] border border-[#8d8d8d] shadow-[0_4px_14px_rgba(0,0,0,0.35)]">
        <BrowserWindow active showPin back title="Emergency app" url="localhost:60212/#/request-ambulancia" tabIndent="w-[42px]" tabWidth="w-[231px]" heading="Solicitar ambulancia">
          <div className="flex min-h-0 flex-1 flex-col bg-[#ececec]">
            <div className="h-[419px] shrink-0"><CityMap /></div>
            <div className="flex flex-col items-center pt-[16px] font-['Roboto',sans-serif]">
              <p className="whitespace-nowrap text-[18px] font-medium leading-[24px] tracking-[-0.14px] text-[#111]">Solicitud enviada. Esperando atención de emergencia...</p>
              <button className="mt-[16px] flex h-[31px] w-[101px] items-center justify-center rounded-full bg-[#f44336] text-[14px] font-medium tracking-[-0.1px] text-[#b5433f]">Cancelar</button>
            </div>
          </div>
        </BrowserWindow>
      </div>

      {/* driver app */}
      <div className="absolute left-[928px] top-[9px] h-[975px] w-[897px] border border-[#b9b9b9] shadow-[0_3px_10px_rgba(0,0,0,0.3)]">
        <BrowserWindow title="Emergency driver app" url="localhost:60260" tabIndent="w-[42px]" tabWidth="w-[231px]" heading="Inicio">
          <div className="flex flex-1 flex-col items-center bg-[#fdf7fe] px-[15px] font-['Roboto',sans-serif]">
            <p className="mt-[35px] whitespace-nowrap text-[14px] font-medium leading-[20px] tracking-[-0.2px] text-[#111] [text-shadow:0_2px_4px_rgba(0,0,0,0.5)]">Ver historial de emergencias</p>
            <h2 className="mt-[41px] whitespace-nowrap text-[18px] font-medium leading-[24px] tracking-[-0.12px] text-[#1d1b20]">Emergencias activas</h2>
            <section className="relative mt-[18px] flex h-[116px] w-full flex-col rounded-[12px] bg-[#f1e5f2] px-[16px] pt-[15px] shadow-[0_1px_2px_rgba(0,0,0,0.25)]">
              <div className="whitespace-nowrap text-[16px] font-medium leading-[24px] tracking-[-0.12px] text-[#1d1b20]">Cl. 4 #4-18, La Victoria, Cúcuta, Norte de Santander, Colombia</div>
              <div className="mt-[2px] text-[14px] leading-[20px] text-[#e25563]">Distancia: null</div>
              <button className="mt-[9px] flex h-[31px] w-[142px] items-center justify-center self-center rounded-full bg-[#4caf50] text-[14px] font-medium tracking-[-0.18px] text-white">Ver emergencia</button>
              <svg className="absolute right-[30px] top-[30px]" width="26" height="24" viewBox="0 0 26 24">
                <path d="M15 7l3 3 6-4" fill="none" stroke="#4a4450" strokeWidth="1.600" />
                <path d="M6 2.200c1 0 1.600.7 1.600 1.600v4.700c.5-.8 2.300-.7 2.600.3.600-.7 2.300-.5 2.600.6.700-.6 2.200-.2 2.400.9.900-.4 2.100.2 2.100 1.500 0 3.200-1.800 6.700-5.800 6.700-4.200 0-5.500-1.500-7.200-4.200L1.600 11c.8-1.400 2-.9 2.900.4V3.800c0-.9.600-1.600 1.500-1.600z" fill="#fff" stroke="#4a4a4a" strokeWidth="1.200" strokeLinejoin="round" />
              </svg>
            </section>
          </div>
        </BrowserWindow>
      </div>

      {/* background window controls showing through */}
      <svg className="absolute left-[1765px] top-[8px]" width="60" height="16" viewBox="0 0 60 16" fill="none" stroke="#fff">
        <path d="M3 7.500h10M49.500 5.500h7v7h-7zM51.500 5V3h7v7h-2" />
      </svg>

      {/* screen sharing notice */}
      <div className="absolute left-[702px] top-[921px] flex h-[40px] w-[450px] items-center bg-[#2e2e2e] pl-[9px] font-['Open_Sans',sans-serif] text-[11px] text-white shadow-[0_6px_12px_rgba(0,0,0,0.35)]">
        <svg width="7" height="11" viewBox="0 0 7 11"><path d="M1.200 0v11M5.200 0v11" stroke="#f0f0f0" strokeWidth="1.300" /></svg>
        <span className="ml-[9px] w-[234px] whitespace-nowrap tracking-[-0.06px]">www.veed.io está compartiendo tu pantalla.</span>
        <button className="flex h-[30px] w-[129px] items-center justify-center whitespace-nowrap rounded-[3px] bg-[#2c62d6] text-[11px] font-semibold tracking-[-0.1px]">Dejar de compartir</button>
        <a className="ml-[12px] font-semibold tracking-[-0.1px] text-[#a9c7ef] underline">Ocultar</a>
      </div>

      <Watermark />
    </div>
  );
}
